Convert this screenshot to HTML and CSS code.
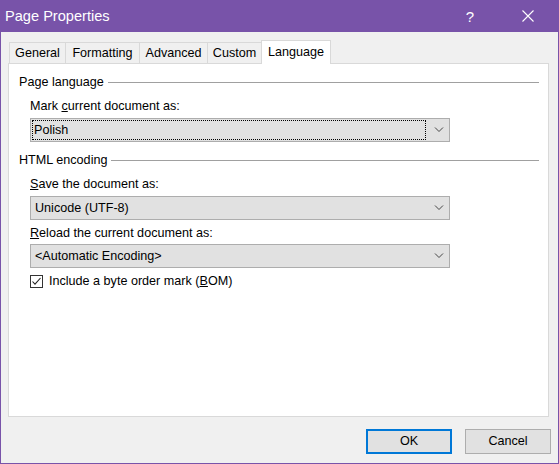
FILE: index.html
```html
<!DOCTYPE html>
<html>
<head>
  <title>Page Properties</title>
  <link rel="stylesheet" href="styles.css">
</head>
<body>
  <div class="window">
    <div class="titlebar">
      <span class="title">Page Properties</span>
      <span class="help">?</span>
      <svg class="close" width="12" height="12" viewBox="0 0 12 12">
        <path d="M0.5 0.5 L11.5 11.5 M11.5 0.5 L0.5 11.5" stroke="#fff" stroke-width="1.1" fill="none"/>
      </svg>
    </div>

    <div class="tabs">
      <div class="tab general">General</div>
      <div class="tab formatting">Formatting</div>
      <div class="tab advanced">Advanced</div>
      <div class="tab custom">Custom</div>
      <div class="tab language active">Language</div>
    </div>

    <div class="panel">
      <div class="group">
        <span>Page language</span><span class="rule"></span>
      </div>
      <div class="field first">Mark <u>c</u>urrent document as:</div>
      <div class="select">
        <span class="value focused">Polish</span>
        <svg class="chevron" width="10" height="6" viewBox="0 0 10 6"><path d="M1 0.5 L5 4.5 L9 0.5" stroke="#444" fill="none"/></svg>
      </div>

      <div class="group second">
        <span>HTML encoding</span><span class="rule"></span>
      </div>
      <div class="field first"><u>S</u>ave the document as:</div>
      <div class="select">
        <span class="value">Unicode (UTF-8)</span>
        <svg class="chevron" width="10" height="6" viewBox="0 0 10 6"><path d="M1 0.5 L5 4.5 L9 0.5" stroke="#444" fill="none"/></svg>
      </div>
      <div class="field"><u>R</u>eload the current document as:</div>
      <div class="select">
        <span class="value">&lt;Automatic Encoding&gt;</span>
        <svg class="chevron" width="10" height="6" viewBox="0 0 10 6"><path d="M1 0.5 L5 4.5 L9 0.5" stroke="#444" fill="none"/></svg>
      </div>
      <div class="check">
        <svg class="box" width="13" height="13" viewBox="0 0 13 13">
          <rect x="0.5" y="0.5" width="12" height="12" fill="#fff" stroke="#333"/>
          <path d="M2.5 6.5 L5 9.2 L10.5 3" stroke="#222" stroke-width="1.1" fill="none"/>
        </svg>
        <span>Include a byte order mark (<u>B</u>OM)</span>
      </div>
    </div>

    <div class="buttons">
      <div class="button default">OK</div>
      <div class="button">Cancel</div>
    </div>
  </div>
</body>
</html>
```

FILE: styles.css
```css
body {
  margin: 0;
  font-family: "Segoe UI", "Liberation Sans", sans-serif;
  font-size: 12.6px;
  color: #000;
}

.window {
  width: 559px;
  height: 464px;
  box-sizing: border-box;
  border: 1px solid #7853a9;
  border-top: none;
  background: #f0f0f0;
  display: flex;
  flex-direction: column;
}

.titlebar {
  height: 32px;
  margin: 0 -1px;
  background: #7853a9;
  color: #fff;
  display: flex;
  align-items: center;
  padding-left: 5px;
}
.title {
  font-size: 14.6px;
  flex: 1;
}
.help {
  font-size: 15px;
  margin-right: 48px;
}
.close {
  margin-right: 25px;
}

.tabs {
  display: flex;
  align-items: flex-end;
  height: 23px;
  margin: 8px 0 0 9px;
  position: relative;
  z-index: 1;
}
.tab {
  height: 20px;
  line-height: 20px;
  text-align: center;
  border: 1px solid #d9d9d9;
  border-bottom: none;
  margin-left: -1px;
  background: #f0f0f0;
}
.general { width: 55px; }
.formatting { width: 73px; }
.advanced { width: 67px; }
.custom { width: 53px; }
.language { width: 68px; }
.tab.active {
  height: 23px;
  line-height: 22px;
  background: #fff;
  margin-bottom: -1px;
}

.panel {
  height: 342px;
  margin: 0 9px 0 7px;
  border: 1px solid #d9d9d9;
  background: #fff;
  padding: 10px 9px 0 10px;
}

.group {
  display: flex;
  align-items: center;
  line-height: 16px;
}
.group.second {
  margin-top: 10px;
}
.rule {
  flex: 1;
  border-top: 1px solid #a0a0a0;
  margin-left: 4px;
}

.field {
  line-height: 16px;
  margin: 5px 0 3px 11px;
}
.field.first {
  margin-top: 8px;
  margin-bottom: 4px;
}

.select {
  width: 418px;
  height: 22px;
  margin-left: 11px;
  border: 1px solid #adadad;
  background: #e1e1e1;
  display: flex;
  align-items: center;
}
.value {
  flex: 1;
  padding-left: 4px;
  line-height: 16px;
}
.value.focused {
  margin: 0 9px 0 2px;
  padding-left: 1px;
  outline: 1px dotted #000;
  line-height: 18px;
}
.chevron {
  margin-right: 5px;
}

.check {
  display: flex;
  align-items: center;
  margin: 5px 0 0 11px;
  line-height: 16px;
}
.box {
  margin-right: 6px;
}

.buttons {
  display: flex;
  justify-content: flex-end;
  gap: 13px;
  margin: 12px 7px 0 0;
}
.button {
  width: 84px;
  height: 23px;
  line-height: 23px;
  text-align: center;
  border: 1px solid #adadad;
  background: #e1e1e1;
}
.button.default {
  width: 82px;
  height: 21px;
  line-height: 21px;
  border: 2px solid #0078d7;
}
```
